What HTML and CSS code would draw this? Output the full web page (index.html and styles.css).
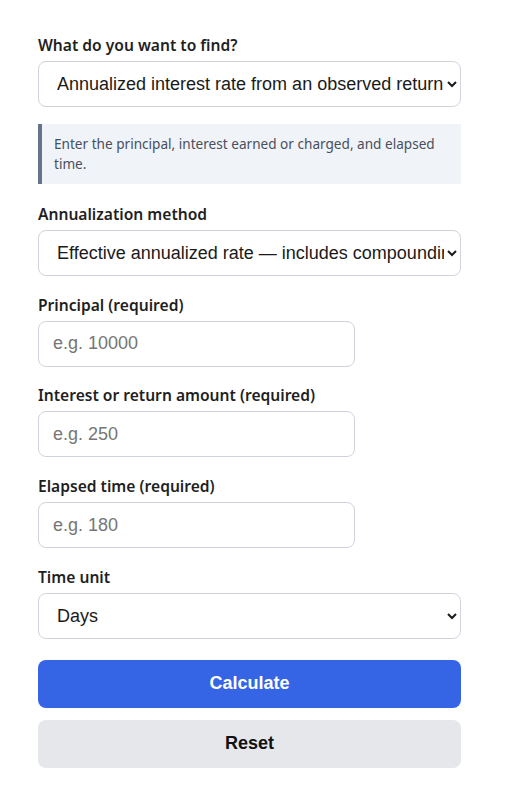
FILE: index.html
```html
<!DOCTYPE html>
<html lang="en">
<head>
<meta charset="utf-8">
<title>Annualized rate calculator</title>
<link rel="stylesheet" href="styles.css">
</head>
<body>
<main class="form">
  <div class="field">
    <label class="label" for="find">What do you want to find?</label>
    <select id="find" class="control select">
      <option>Annualized interest rate from an observed return</option>
    </select>
  </div>
  <p class="hint">Enter the principal, interest earned or charged, and elapsed time.</p>
  <div class="field">
    <label class="label" for="method">Annualization method</label>
    <select id="method" class="control select">
      <option>Effective annualized rate — includes compounding</option>
    </select>
  </div>
  <div class="field">
    <label class="label" for="principal">Principal (required)</label>
    <input id="principal" class="control input" type="text" placeholder="e.g. 10000">
  </div>
  <div class="field">
    <label class="label" for="interest">Interest or return amount (required)</label>
    <input id="interest" class="control input" type="text" placeholder="e.g. 250">
  </div>
  <div class="field">
    <label class="label" for="elapsed">Elapsed time (required)</label>
    <input id="elapsed" class="control input" type="text" placeholder="e.g. 180">
  </div>
  <div class="field">
    <label class="label" for="unit">Time unit</label>
    <select id="unit" class="control select">
      <option>Days</option>
    </select>
  </div>
  <div class="actions">
    <button class="btn btn-primary" type="button">Calculate</button>
    <button class="btn btn-secondary" type="button">Reset</button>
  </div>
</main>
</body>
</html>
```

FILE: styles.css
```css
html, body {
  margin: 0;
  padding: 0;
  background: #ffffff;
}

body {
  font-family: "Noto Sans", "Open Sans", sans-serif;
  color: #1a1a1a;
}

.form {
  width: 423px;
  padding: 33px 0 0 38px;
  display: flex;
  flex-direction: column;
}

.field {
  display: flex;
  flex-direction: column;
  gap: 4px;
  margin-bottom: 16.8px;
}

.label {
  font-size: 15.6px;
  line-height: 24px;
  font-weight: 600;
  color: #1f1f1f;
}

.control {
  box-sizing: border-box;
  height: 46px;
  border: 1px solid #cfd4dc;
  border-radius: 8px;
  background: #ffffff;
  font-family: "Liberation Sans", Arial, sans-serif;
  font-size: 18px;
  color: #1a1a1a;
  padding: 0 14px;
  margin: 0;
}

.select {
  width: 423px;
  padding-left: 14px;
  padding-right: 0;
}

.input {
  width: 317px;
}

.input::placeholder {
  color: #767676;
}

.hint {
  margin: 0 0 18px 0;
  padding: 10px 12px;
  border-left: 4px solid #64748b;
  background: #f0f3f8;
  font-size: 13.6px;
  line-height: 20px;
  color: #48505c;
}

.actions {
  display: flex;
  flex-direction: column;
  gap: 12px;
  margin-top: 4px;
}

.btn {
  height: 48px;
  border: none;
  border-radius: 8px;
  font-family: "Liberation Sans", Arial, sans-serif;
  font-size: 18px;
  font-weight: 700;
  width: 423px;
}

.btn-primary {
  background: #3565e5;
  color: #ffffff;
}

.btn-secondary {
  background: #e5e7eb;
  color: #111111;
}
```
